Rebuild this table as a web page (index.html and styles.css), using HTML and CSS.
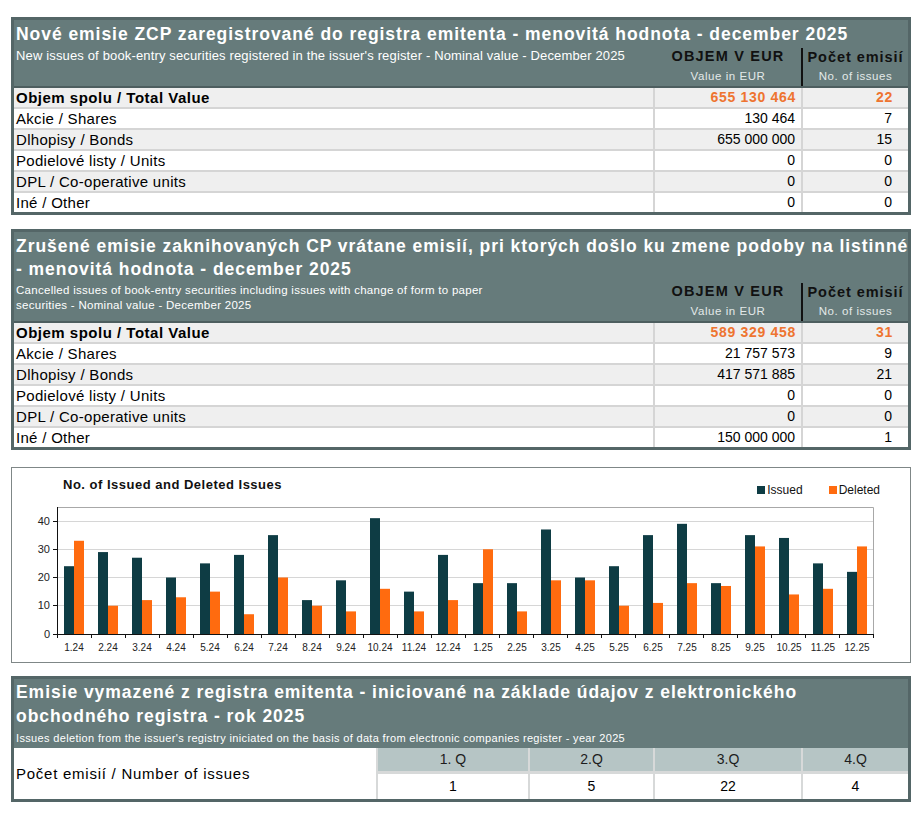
FILE: index.html
```html
<!DOCTYPE html>
<html lang="sk">
<head>
<meta charset="utf-8">
<title>Emisie ZCP - december 2025</title>
<link rel="stylesheet" href="styles.css">
</head>
<body>
<main class="page">

  <section class="tbl t1">
    <div class="band">
      <h1 class="title">Nové emisie ZCP zaregistrované do registra emitenta - menovitá hodnota - december 2025</h1>
      <div class="band-grid">
        <p class="sub">New issues of book-entry securities registered in the issuer's register - Nominal value - December 2025</p>
        <div class="hcol val"><span class="h-main">OBJEM V EUR</span><span class="h-sub">Value in EUR</span></div>
        <div class="hcol cnt"><span class="h-main">Počet emisií</span><span class="h-sub">No. of issues</span></div>
      </div>
    </div>
    <div class="rows">
      <div class="row alt total"><span class="lbl">Objem spolu / Total Value</span><span class="num">655 130 464</span><span class="num c">22</span></div>
      <div class="row"><span class="lbl">Akcie / Shares</span><span class="num">130 464</span><span class="num c">7</span></div>
      <div class="row alt"><span class="lbl">Dlhopisy / Bonds</span><span class="num">655 000 000</span><span class="num c">15</span></div>
      <div class="row"><span class="lbl">Podielové listy / Units</span><span class="num">0</span><span class="num c">0</span></div>
      <div class="row alt"><span class="lbl">DPL / Co-operative units</span><span class="num">0</span><span class="num c">0</span></div>
      <div class="row"><span class="lbl">Iné / Other</span><span class="num">0</span><span class="num c">0</span></div>
    </div>
  </section>

  <section class="tbl t2">
    <div class="band">
      <h2 class="title">Zrušené emisie zaknihovaných CP vrátane emisií, pri ktorých došlo ku zmene podoby na listinné<br>- menovitá hodnota - december 2025</h2>
      <div class="band-grid">
        <p class="sub">Cancelled issues of book-entry securities including issues with change of form to paper<br>securities - Nominal value - December 2025</p>
        <div class="hcol val"><span class="h-main">OBJEM V EUR</span><span class="h-sub">Value in EUR</span></div>
        <div class="hcol cnt"><span class="h-main">Počet emisií</span><span class="h-sub">No. of issues</span></div>
      </div>
    </div>
    <div class="rows">
      <div class="row alt total"><span class="lbl">Objem spolu / Total Value</span><span class="num">589 329 458</span><span class="num c">31</span></div>
      <div class="row"><span class="lbl">Akcie / Shares</span><span class="num">21 757 573</span><span class="num c">9</span></div>
      <div class="row alt"><span class="lbl">Dlhopisy / Bonds</span><span class="num">417 571 885</span><span class="num c">21</span></div>
      <div class="row"><span class="lbl">Podielové listy / Units</span><span class="num">0</span><span class="num c">0</span></div>
      <div class="row alt"><span class="lbl">DPL / Co-operative units</span><span class="num">0</span><span class="num c">0</span></div>
      <div class="row"><span class="lbl">Iné / Other</span><span class="num">150 000 000</span><span class="num c">1</span></div>
    </div>
  </section>

  <section class="chart">
    <div class="chart-head">
      <h2 class="chart-title">No. of Issued and Deleted Issues</h2>
      <ul class="legend">
        <li><i class="sw iss"></i>Issued</li>
        <li><i class="sw del"></i>Deleted</li>
      </ul>
    </div>
    <svg class="plot" width="898" height="162" viewBox="0 0 898 162">
      <g class="gridl">
        <line x1="45" y1="105.5" x2="862" y2="105.5"/>
        <line x1="45" y1="77.5" x2="862" y2="77.5"/>
        <line x1="45" y1="49.5" x2="862" y2="49.5"/>
        <line x1="45" y1="21.5" x2="862" y2="21.5"/>
      </g>
      <path class="frame" d="M45 7.5H861.5V134"/>
      <g transform="translate(0 134) scale(1 -2.825)">
        <g class="iss">
          <rect x="52" y="0" width="10" height="24"/>
          <rect x="86" y="0" width="10" height="29"/>
          <rect x="120" y="0" width="10" height="27"/>
          <rect x="154" y="0" width="10" height="20"/>
          <rect x="188" y="0" width="10" height="25"/>
          <rect x="222" y="0" width="10" height="28"/>
          <rect x="256" y="0" width="10" height="35"/>
          <rect x="290" y="0" width="10" height="12"/>
          <rect x="324" y="0" width="10" height="19"/>
          <rect x="358" y="0" width="10" height="41"/>
          <rect x="392" y="0" width="10" height="15"/>
          <rect x="426" y="0" width="10" height="28"/>
          <rect x="461" y="0" width="10" height="18"/>
          <rect x="495" y="0" width="10" height="18"/>
          <rect x="529" y="0" width="10" height="37"/>
          <rect x="563" y="0" width="10" height="20"/>
          <rect x="597" y="0" width="10" height="24"/>
          <rect x="631" y="0" width="10" height="35"/>
          <rect x="665" y="0" width="10" height="39"/>
          <rect x="699" y="0" width="10" height="18"/>
          <rect x="733" y="0" width="10" height="35"/>
          <rect x="767" y="0" width="10" height="34"/>
          <rect x="801" y="0" width="10" height="25"/>
          <rect x="835" y="0" width="10" height="22"/>
        </g>
        <g class="del">
          <rect x="62" y="0" width="10" height="33"/>
          <rect x="96" y="0" width="10" height="10"/>
          <rect x="130" y="0" width="10" height="12"/>
          <rect x="164" y="0" width="10" height="13"/>
          <rect x="198" y="0" width="10" height="15"/>
          <rect x="232" y="0" width="10" height="7"/>
          <rect x="266" y="0" width="10" height="20"/>
          <rect x="300" y="0" width="10" height="10"/>
          <rect x="334" y="0" width="10" height="8"/>
          <rect x="368" y="0" width="10" height="16"/>
          <rect x="402" y="0" width="10" height="8"/>
          <rect x="436" y="0" width="10" height="12"/>
          <rect x="471" y="0" width="10" height="30"/>
          <rect x="505" y="0" width="10" height="8"/>
          <rect x="539" y="0" width="10" height="19"/>
          <rect x="573" y="0" width="10" height="19"/>
          <rect x="607" y="0" width="10" height="10"/>
          <rect x="641" y="0" width="10" height="11"/>
          <rect x="675" y="0" width="10" height="18"/>
          <rect x="709" y="0" width="10" height="17"/>
          <rect x="743" y="0" width="10" height="31"/>
          <rect x="777" y="0" width="10" height="14"/>
          <rect x="811" y="0" width="10" height="16"/>
          <rect x="845" y="0" width="10" height="31"/>
        </g>
      </g>
      <path class="axis" d="M45.5 7V134.5H862M41 134.5H45M41 105.5H45M41 77.5H45M41 49.5H45M41 21.5H45M45.5 134v4M79.5 134v4M113.5 134v4M147.5 134v4M181.5 134v4M215.5 134v4M249.5 134v4M283.5 134v4M317.5 134v4M351.5 134v4M385.5 134v4M419.5 134v4M453.5 134v4M487.5 134v4M521.5 134v4M555.5 134v4M589.5 134v4M623.5 134v4M657.5 134v4M691.5 134v4M725.5 134v4M759.5 134v4M793.5 134v4M827.5 134v4M861.5 134v4"/>
      <g class="ylab">
        <text x="38" y="138">0</text>
        <text x="38" y="109">10</text>
        <text x="38" y="81">20</text>
        <text x="38" y="53">30</text>
        <text x="38" y="25">40</text>
      </g>
      <g class="xlab">
        <text x="62" y="151">1.24</text>
        <text x="96" y="151">2.24</text>
        <text x="130" y="151">3.24</text>
        <text x="164" y="151">4.24</text>
        <text x="198" y="151">5.24</text>
        <text x="232" y="151">6.24</text>
        <text x="266" y="151">7.24</text>
        <text x="300" y="151">8.24</text>
        <text x="334" y="151">9.24</text>
        <text x="368" y="151">10.24</text>
        <text x="402" y="151">11.24</text>
        <text x="436" y="151">12.24</text>
        <text x="471" y="151">1.25</text>
        <text x="505" y="151">2.25</text>
        <text x="539" y="151">3.25</text>
        <text x="573" y="151">4.25</text>
        <text x="607" y="151">5.25</text>
        <text x="641" y="151">6.25</text>
        <text x="675" y="151">7.25</text>
        <text x="709" y="151">8.25</text>
        <text x="743" y="151">9.25</text>
        <text x="777" y="151">10.25</text>
        <text x="811" y="151">11.25</text>
        <text x="845" y="151">12.25</text>
      </g>
    </svg>
  </section>

  <section class="tbl t3">
    <div class="band">
      <h2 class="title">Emisie vymazené z registra emitenta - iniciované na základe údajov z elektronického<br>obchodného registra - rok 2025</h2>
      <p class="sub3">Issues deletion from the issuer's registry iniciated on the basis of data from electronic companies register - year 2025</p>
    </div>
    <div class="qgrid">
      <div class="qlbl">Počet emisií / Number of issues</div>
      <div class="qh">1. Q</div>
      <div class="qh">2.Q</div>
      <div class="qh">3.Q</div>
      <div class="qh">4.Q</div>
      <div class="qv">1</div>
      <div class="qv">5</div>
      <div class="qv">22</div>
      <div class="qv">4</div>
    </div>
  </section>

</main>
</body>
</html>
```

FILE: styles.css
```css
* { box-sizing: border-box; margin: 0; padding: 0; }
html, body { background: #fff; }
body { font-family: "Liberation Sans", Arial, Helvetica, sans-serif; color: #000; }

.page { width: 900px; margin: 17px 0 0 11px; display: flex; flex-direction: column; }

.tbl { border: 3px solid #546667; background: #667b7b; }
.t2 { margin-top: 14px; }
.chart { margin-top: 17px; }
.t3 { margin-top: 13px; }

.title {
  font-size: 17.5px; font-weight: 700; letter-spacing: .95px; line-height: 23px;
  color: #fff; white-space: nowrap; padding: 3px 0 0 2px;
}

.band-grid { display: grid; grid-template-columns: 641px 146px 107px; }
.sub { color: #fff; font-size: 13px; letter-spacing: .15px; line-height: 18px; padding: 1px 0 0 2px; }
.t2 .sub { font-size: 11.5px; letter-spacing: .28px; line-height: 15px; padding-top: 2px; }

.hcol { display: flex; flex-direction: column; align-items: center; }
.hcol.cnt { border-left: 2px solid #111; margin-top: 2px; }
.h-main { font-size: 14.5px; font-weight: 700; letter-spacing: 1.2px; line-height: 20px; height: 20px; color: #111; }
.cnt .h-main { letter-spacing: .95px; line-height: 18px; height: 18px; }
.h-sub { font-size: 11.5px; letter-spacing: .55px; line-height: 20px; color: #e3e9e9; }

.rows { display: flex; flex-direction: column; gap: 2px; background: #d5d5d5; border-top: 2px solid #4d5e5f; }
.row { display: grid; grid-template-columns: 639px 146px 105px; column-gap: 2px; height: 19px; font-size: 14px; line-height: 19px; }
.row > span { background: #fff; }
.row.alt > span { background: #efefef; }
.lbl { padding-left: 2px; font-size: 15px; letter-spacing: .3px; }
.num { text-align: right; padding-right: 6px; }
.num.c { padding-right: 16px; }
.total { font-weight: 700; }
.total .lbl { letter-spacing: .5px; }
.total .num { color: #ee7430; letter-spacing: .7px; padding-right: 5px; }
.total .num.c { padding-right: 15px; }

/* chart */
.chart { border: 1px solid #7f8787; background: #fff; height: 196px; }
.chart-head { display: flex; justify-content: space-between; align-items: flex-start; height: 32px; padding: 0 30px 0 51px; }
.chart-title { font-size: 13px; font-weight: 700; letter-spacing: .5px; line-height: 14px; margin-top: 10px; color: #111; }
.legend { list-style: none; display: flex; gap: 26px; margin-top: 15px; font-size: 12px; line-height: 14px; color: #111; }
.legend li { display: flex; align-items: center; gap: 2px; }
.sw { display: block; width: 8px; height: 8px; }
.sw.iss { background: #0e3c44; }
.sw.del { background: #ff6b0f; }
.plot { display: block; }
.plot text { font-family: "Liberation Sans", Arial, sans-serif; font-size: 10px; fill: #222; }
.ylab text { text-anchor: end; font-size: 11px; }
.xlab text { text-anchor: middle; }
.gridl line { stroke: #d6d6d6; stroke-width: 1; }
.frame { fill: none; stroke: #a8a8a8; stroke-width: 1; }
.axis { fill: none; stroke: #111; stroke-width: 1; }
.iss rect { fill: #0e3c44; }
.del rect { fill: #ff6b0f; }

/* table 3 */
.t3 .title { padding-top: 1px; line-height: 24px; }
.sub3 { color: #fff; font-size: 11px; letter-spacing: .34px; line-height: 20px; padding-left: 2px; }
.qgrid {
  display: grid; grid-template-columns: 362px 150px 123px 146px 105px;
  grid-template-rows: 23px 25px; gap: 3px 2px; background: #d7d9d9;
}
.qlbl { grid-row: 1 / span 2; background: #fff; display: flex; align-items: center; padding-left: 2px; font-size: 15px; letter-spacing: .75px; }
.qh { background: #b6c5c5; text-align: center; font-size: 14px; line-height: 23px; color: #1d1d1d; }
.qv { background: #fff; text-align: center; font-size: 14px; line-height: 25px; }
```
